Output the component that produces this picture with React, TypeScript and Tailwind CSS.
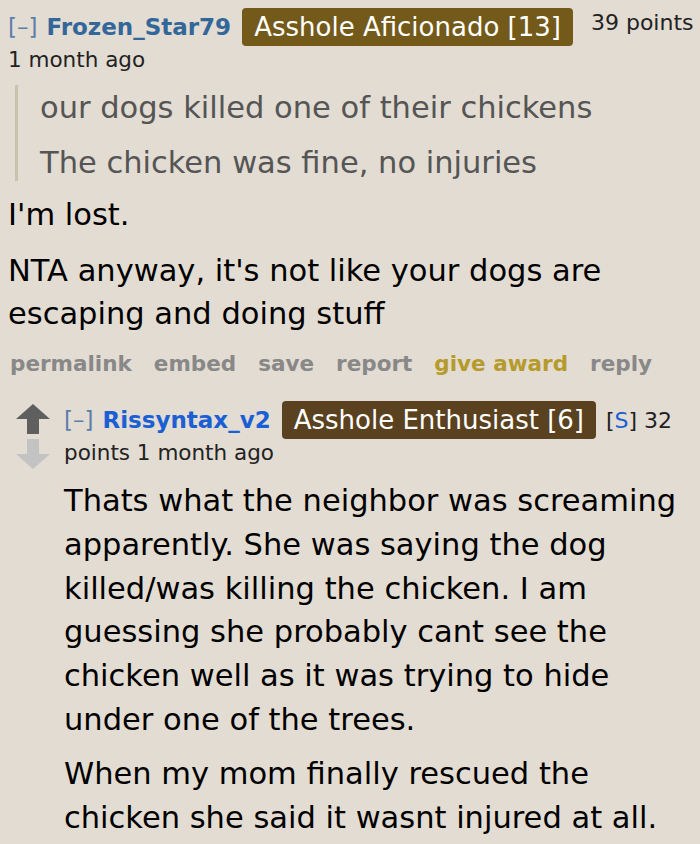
export default function App() {
  const links = ["permalink", "embed", "save", "report", "give award", "reply"];
  return (
    <div className="w-[700px] h-[844px] overflow-hidden bg-[#e3dcd2] text-black" style={{ fontFamily: '"DejaVu Sans", Verdana, sans-serif' }}>
      {/* first comment */}
      <div className="pl-[8px] pt-[8px]">
        <div className="flex items-start">
          <div className="flex items-center h-[38px] text-[23px]">
            <span className="text-[#5a7fab]">[–]</span>
            <span className="ml-[9px] font-bold text-[#336699]">Frozen_Star79</span>
          </div>
          <div className="ml-[11px] h-[38px] px-[12px] rounded-[4px] bg-[#735a1a] text-white text-[26px] leading-[38px]">
            Asshole Aficionado [13]
          </div>
          <div className="ml-[18px] text-[22px] leading-[30px] text-[#222]">39 points</div>
        </div>
        <div className="text-[21.5px] leading-[28px] text-[#222]">1 month ago</div>

        <div className="mt-[11px] ml-[7px] border-l-[3px] border-[#c8c3ae] pl-[22px] pt-[5px] text-[#555] text-[30.5px] leading-[36px]">
          <p>our dogs killed one of their chickens</p>
          <p className="mt-[19px]">The chicken was fine, no injuries</p>
        </div>

        <div className="mt-[12px] text-[30.5px] leading-[43px]">
          <p>I'm lost.</p>
          <p className="mt-[13px]">NTA anyway, it's not like your dogs are escaping and doing stuff</p>
        </div>

        <div className="mt-[15px] flex gap-[22px] text-[21.5px] leading-[28px] font-bold text-[#888] pl-[2px]">
          {links.map((l) => (
            <span key={l} className={l === "give award" ? "text-[#b59b2b]" : ""}>{l}</span>
          ))}
        </div>
      </div>

      {/* reply */}
      <div className="mt-[23px] flex pl-[16px]">
        <div className="flex flex-col items-center w-[34px] pt-[3px] gap-[5px]">
          <svg width="34" height="30" viewBox="0 0 34 30">
            <path d="M17 0 L34 15 L23 15 L23 30 L11 30 L11 15 L0 15 Z" fill="#5f5f5f" />
          </svg>
          <svg width="34" height="30" viewBox="0 0 34 30">
            <path d="M11 0 L23 0 L23 15 L34 15 L17 30 L0 15 L11 15 Z" fill="#c3c3c3" />
          </svg>
        </div>
        <div className="ml-[14px] flex-1">
          <div className="flex items-center h-[38px]">
            <span className="text-[23px] text-[#5a7fab]">[–]</span>
            <span className="ml-[9px] text-[23px] font-bold text-[#1a5fd4]">Rissyntax_v2</span>
            <span className="ml-[11px] h-[38px] px-[12px] rounded-[4px] bg-[#5a4220] text-white text-[26px] leading-[38px]">
              Asshole Enthusiast [6]
            </span>
            <span className="ml-[10px] text-[22px] text-[#222]">
              [<span className="text-[#1a5fd4]">S</span>] 32
            </span>
          </div>
          <div className="text-[21.5px] leading-[28px] text-[#222]">points 1 month ago</div>

          <div className="mt-[12px] text-[30.5px] leading-[43.8px]">
            <p>Thats what the neighbor was screaming apparently. She was saying the dog killed/was killing the chicken. I am guessing she probably cant see the chicken well as it was trying to hide under one of the trees.</p>
            <p className="mt-[10px]">When my mom finally rescued the chicken she said it wasnt injured at all.</p>
          </div>
        </div>
      </div>
    </div>
  );
}
